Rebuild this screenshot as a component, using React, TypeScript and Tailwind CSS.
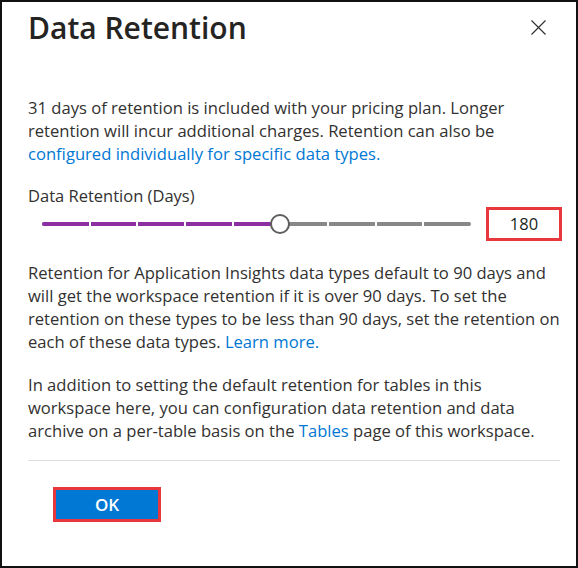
const font = { fontFamily: '"Segoe UI", "Open Sans", "Noto Sans", sans-serif' };

const Slider = ({ value, steps }: { value: number; steps: number }) => {
  const pct = (value / steps) * 100;
  const ticks = Array.from({ length: steps - 1 }, (_, i) => ((i + 1) / steps) * 100);
  return (
    <div className="relative flex h-5 flex-1 items-center">
      <div className="relative h-1 w-full overflow-hidden rounded-full bg-[#8a8886]">
        <div className="absolute left-0 top-0 h-full bg-[#8c2fa3]" style={{ width: `${pct}%` }} />
        {ticks.map((t) => (
          <div key={t} className="absolute top-0 h-full w-[2px] -translate-x-1/2 bg-white" style={{ left: `${t}%` }} />
        ))}
      </div>
      <div
        className="absolute top-1/2 h-5 w-5 -translate-x-1/2 -translate-y-1/2 rounded-full border-2 border-[#605e5c] bg-white"
        style={{ left: `${pct}%` }}
      />
    </div>
  );
};

export default function App() {
  return (
    <div className="flex h-[568px] w-[578px] flex-col border-2 border-[#111] bg-white text-[#323130]" style={font}>
      {/* Header */}
      <div className="flex items-start justify-between pl-[26px] pr-[30px] pt-[6px]">
        <h1 className="text-[30px] font-semibold leading-[40px] text-[#252423]">Data Retention</h1>
        <button className="mt-[12px] text-[#323130]">
          <svg width="15" height="15" viewBox="0 0 15 15">
            <path d="M0.5 0.5 L14.5 14.5 M14.5 0.5 L0.5 14.5" stroke="currentColor" strokeWidth="1.2" fill="none" />
          </svg>
        </button>
      </div>

      <div className="pl-[26px] pr-[16px] text-[16.6px]">
        <p className="mt-[48px] whitespace-nowrap leading-[23px]">
          31 days of retention is included with your pricing plan. Longer
          <br />
          retention will incur additional charges. Retention can also be
          <br />
          <a className="text-[#0078d4]">configured individually for specific data types.</a>
        </p>

        <div className="mt-[20px] text-[16.5px] leading-[22px]">Data Retention (Days)</div>

        <div className="mr-[-2px] flex items-center gap-[15px]">
          <div className="flex flex-1 pl-[14px]">
            <Slider value={5} steps={9} />
          </div>
          <div className="flex h-[34px] w-[76px] items-center justify-center border-[3px] border-[#e8383d] text-[16.5px] text-[#201f1e]">
            180
          </div>
        </div>

        <p className="mt-[20px] whitespace-nowrap leading-[23px]">
          Retention for Application Insights data types default to 90 days and
          <br />
          will get the workspace retention if it is over 90 days. To set the
          <br />
          retention on these types to be less than 90 days, set the retention on
          <br />
          each of these data types. <a className="text-[#0078d4]">Learn more.</a>
        </p>

        <p className="mt-[20px] whitespace-nowrap leading-[23px]">
          In addition to setting the default retention for tables in this
          <br />
          workspace here, you can configuration data retention and data
          <br />
          archive on a per-table basis on the <a className="text-[#0078d4]">Tables</a> page of this workspace.
        </p>

        <div className="mt-[18px] h-px bg-[#e1dfdd]" />

        <div className="mt-[26px] pl-[25px]">
          <button className="flex h-[35px] w-[108px] items-center justify-center border-[3px] border-[#e8383d] bg-[#0078d4] text-[17px] font-semibold text-white">
            OK
          </button>
        </div>
      </div>
    </div>
  );
}
